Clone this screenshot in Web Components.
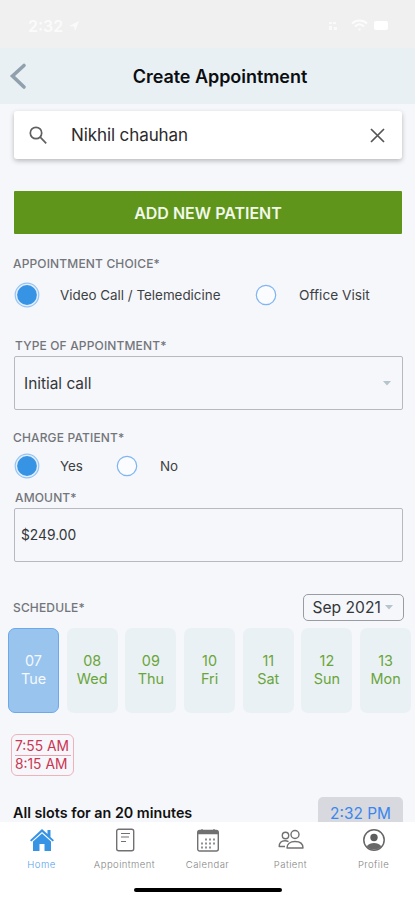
<!DOCTYPE html>
<html lang="en">
<head>
<meta charset="utf-8">
<title>Create Appointment</title>
<style>
html,body{margin:0;height:100%}
body{font-family:Inter,"Liberation Sans",sans-serif;color:#222;background:#f5f7fb;overflow:hidden}
</style>
</head>
<body>
<appointment-screen></appointment-screen>
<script>
function define(name, render) {
  customElements.define(name, class extends HTMLElement {
    connectedCallback() {
      if (this.shadowRoot) return;
      this.attachShadow({ mode: 'open' }).innerHTML = render(this);
    }
  });
}

define('status-bar', () => `
<style>
:host{display:flex;height:48px;box-sizing:border-box;padding:3px 25px 0 28px;background:#f0f0f0;color:#fbfbfb;align-items:center;gap:6px;font-size:16px;font-weight:600}
.gap{flex:1}
svg{display:block}
</style>
<span>2:32</span>
<svg width="10" height="10" viewBox="0 0 10 10"><path d="M0 5 10 0 6 10 5 5.500z" fill="#fafafa"/></svg>
<span class="gap"></span>
<svg width="62" height="14" viewBox="0 0 62 14"><g fill="none" stroke="#fcfcfc" stroke-width="2"><path d="M24 4.500c4-4 11-4 15 0M27 7.500c3-3 6-3 9 0M30.500 10.500h2"/></g><rect x="46" y="2" width="14" height="9" rx="2" fill="#fff"/><path d="M1 3h3v2H1zM1 7h3v4H1zM6 8h3v3H6zM5 3h3v2H5z" fill="#fafafa"/></svg>`);

define('app-header', () => `
<style>
:host{display:grid;grid-template-columns:40px 1fr 40px;align-items:center;height:56px;background:#e8f0f4;color:#0b0d10}
svg{margin-left:9px;display:block}
h1{margin:1px -20px 0;padding-left:25px;text-align:center;font-size:18px;font-weight:600;letter-spacing:-.05px;line-height:24px}
</style>
<svg width="18" height="28" viewBox="0 0 18 28"><path d="M15 3.500 3.500 14 15 25" fill="none" stroke="#91a0ad" stroke-width="3.600" stroke-linecap="round" stroke-linejoin="miter"/></svg>
<h1><slot></slot></h1>`);

define('search-box', () => `
<style>
:host{display:flex;align-items:center;height:48px;box-sizing:border-box;margin:7px 13px 0 14px;padding:0 17px 0 15px;background:#fff;border-radius:3px;box-shadow:0 2px 5px rgba(0,0,0,.25)}
span{flex:1;margin-left:23px;font-size:17px;color:#2b2b2b;letter-spacing:-.1px}
svg{display:block}
</style>
<svg width="19" height="19" viewBox="0 0 19 19" fill="none" stroke="#606060" stroke-width="1.700"><circle cx="7" cy="7" r="5.700"/><path d="m11.200 11.200 6 6.200"/></svg>
<span><slot></slot></span>
<svg width="15" height="15" viewBox="0 0 15 15" fill="none" stroke="#555" stroke-width="1.700"><path d="m1 1 13 13M14 1 1 14"/></svg>`);

define('primary-button', () => `
<style>
:host{display:flex;align-items:center;justify-content:center;height:43px;margin:32px 13px 0 14px;background:#5f951b;color:#f2f8ea;font-size:16px;font-weight:600;border-radius:1px}
</style><slot></slot>`);

define('field-label', () => `
<style>:host{display:block;padding-left:13px;font-size:12px;line-height:16px;font-weight:500;color:#73757a;letter-spacing:.15px}</style><slot></slot>`);

define('radio-choice', el => `
<style>
:host{display:flex;flex:none;align-items:center;height:26px;font-size:13.400px;color:#3d3f42;white-space:nowrap}
svg{display:block;margin-right:20px}
</style>
<svg width="26" height="26" viewBox="0 0 26 26">${el.hasAttribute('checked')
  ? '<circle cx="13" cy="13" r="11.800" fill="#e2effd" stroke="#97c4f1" stroke-width="1.200"/><circle cx="13" cy="13" r="9.900" fill="#3794e5"/>'
  : '<circle cx="13" cy="13" r="9.700" fill="#fafcff" stroke="#80b5f1" stroke-width="1.200"/>'}</svg>
<slot></slot>`);

define('radio-row', () => `
<style>:host{display:flex;padding-left:14px}</style><slot></slot>`);

define('form-box', el => `
<style>
:host{display:flex;align-items:center;justify-content:space-between;box-sizing:border-box;height:54px;margin:0 12px 0 14px;padding:0 11px 0 9px;border:1.500px solid #b7b9c0;border-radius:2px;font-size:15.400px;color:#34363a}
:host([amount]){padding-left:6px;font-size:13.800px}
svg{display:block}
</style>
<span><slot></slot></span>${el.hasAttribute('amount') ? '' : '<svg width="8" height="5" viewBox="0 0 8 5"><path d="M0 0h8L4 4.500z" fill="#b4c5ce"/></svg>'}`);

define('schedule-head', () => `
<style>
:host{display:flex;justify-content:space-between;align-items:center;height:27px;padding-right:11.500px}
.m{display:flex;align-items:center;gap:4px;box-sizing:border-box;width:101px;height:27px;padding:0 0 0 9px;border:1px solid #999ca1;border-radius:5px;font-size:15.600px;line-height:19px;color:#34363a;white-space:nowrap}
svg{display:block}
</style>
<slot></slot>
<div class="m"><slot name="month"></slot><svg width="8" height="5" viewBox="0 0 8 5"><path d="M0 0h8L4 4.500z" fill="#b4c5ce"/></svg></div>`);

define('day-strip', () => `
<style>:host{display:flex;gap:7.700px;padding-left:8px;overflow:hidden}</style><slot></slot>`);

define('day-card', () => `
<style>
:host{display:flex;flex-direction:column;align-items:center;justify-content:center;flex:none;box-sizing:border-box;width:51px;height:85px;border-radius:7px;background:#eaf1f4;color:#69a53a;font-size:14.400px;line-height:18px}
:host([selected]){background:#99c4ee;border:1.500px solid #6ca8ea;color:#f4f9ff}
</style>
<slot name="d"></slot><slot></slot>`);

define('slot-range', () => `
<style>
:host{display:flex;flex-direction:column;box-sizing:border-box;width:63px;height:42px;margin-left:11px;padding:2px 2px 0 3px;border:1px solid #f0b1bb;border-radius:6px;color:#cc3450;font-size:13.800px;line-height:18px;white-space:nowrap}
div{height:18px}
div+div{border-top:1px solid #eda0ae;line-height:17px;height:17px}
</style>
<div><slot name="from"></slot></div><div><slot name="to"></slot></div>`);

define('slots-row', () => `
<style>
:host{display:flex;justify-content:space-between;align-items:flex-start;height:26px;padding:0 12px 0 13px}
b{font-size:14.300px;font-weight:600;line-height:18px;margin-top:8px;color:#111}
span{display:block;box-sizing:border-box;width:85px;height:25px;margin-top:1px;border-radius:5px 5px 0 0;background:#d7d9de;color:#3a86ee;font-size:15.400px;line-height:17px;padding-top:8px;text-align:center}
</style>
<b><slot></slot></b><span><slot name="time"></slot></span>`);

const icons = {
  home: '<path d="M12 1 0 12.200l1.400 1.400L12 4l10.600 9.600 1.400-1.400-3.500-3.300V2h-3v4z" fill="#3794e5"/><path d="M12 5.500 3 13.500V23h6.500v-7h5v7H21v-9.500z" fill="#3794e5"/>',
  doc: '<g fill="none" stroke="#717171" stroke-width="1.400"><rect x="3.700" y="1.200" width="17" height="21.500" rx="2"/><path d="M8 5.500h9M8 9h8M8 13.500h5" stroke-width="1.200"/></g>',
  cal: '<g fill="none" stroke="#717171" stroke-width="1.400"><rect x="1.700" y="2.500" width="20.600" height="20.500" rx="2"/><path d="M2 4.500h20" stroke-width="3.500"/><path d="M6 1v3M18 1v3" stroke-width="1.200"/><path d="M9 11.500h10M5 15.500h14M5 19.500h10" stroke-width="1.800" stroke-dasharray="2 2" stroke="#909090"/></g>',
  people: '<g fill="none" stroke="#717171" stroke-width="1.400" stroke-linejoin="round"><circle cx="16" cy="6.500" r="4"/><path d="M8 20c0-4 3-6.500 8-6.500s8 2.500 8 6.500z"/><circle cx="6.500" cy="7.500" r="3.200"/><path d="M6 18.500H.2c0-3.800 2-5.700 5.800-5.700 1.400 0 2.500.3 3.500.9"/></g>',
  user: '<circle cx="12" cy="12" r="10.200" fill="none" stroke="#666" stroke-width="1.500"/><circle cx="12" cy="9.500" r="3.700" fill="#5d5d5d"/><path d="M4.700 18.200c2-2.500 4.300-3.200 7.300-3.200s5.300.7 7.300 3.200A9.500 9.500 0 0 1 4.700 18.200z" fill="#686868"/>'
};
define('nav-item', el => `
<style>
:host{display:flex;flex-direction:column;align-items:center;flex:1;color:#858585;font-size:9.500px;line-height:12px;letter-spacing:.45px;font-weight:300}
:host([active]){color:#50a3ec}
svg{display:block;margin-bottom:6.500px;overflow:visible}
</style>
<svg width="24" height="24" viewBox="0 0 24 24">${icons[el.getAttribute('icon')]}</svg><slot></slot>`);

define('bottom-nav', () => `
<style>
:host{display:flex;flex-direction:column;height:78px;box-sizing:border-box;padding-top:6px;background:#fff}
nav{display:flex}
i{display:block;width:148px;height:4.500px;border-radius:3px;background:#000;margin:17px auto 0}
</style>
<nav><slot></slot></nav><i></i>`);

define('appointment-screen', () => `
<style>
:host{display:flex;flex-direction:column;height:900px;width:415px;overflow:hidden;background:#f5f7fb}
:host>*{flex:none}
</style>
<status-bar></status-bar>
<app-header>Create Appointment</app-header>
<search-box>Nikhil chauhan</search-box>
<primary-button>ADD NEW PATIENT</primary-button>
<field-label style="margin-top:22px">APPOINTMENT CHOICE*</field-label>
<radio-row style="margin-top:10px"><radio-choice checked style="width:239px">Video Call / Telemedicine</radio-choice><radio-choice style="font-size:13.700px">Office Visit</radio-choice></radio-row>
<field-label style="margin-top:30px;margin-left:2px">TYPE OF APPOINTMENT*</field-label>
<form-box style="margin-top:2px">Initial call</form-box>
<field-label style="margin-top:20px">CHARGE PATIENT*</field-label>
<radio-row style="margin-top:7px"><radio-choice checked style="width:100px">Yes</radio-choice><radio-choice>No</radio-choice></radio-row>
<field-label style="margin-top:11px;margin-left:2px">AMOUNT*</field-label>
<form-box amount style="margin-top:1.500px">$249.00</form-box>
<schedule-head style="margin-top:32.500px"><field-label>SCHEDULE*</field-label><span slot="month">Sep 2021</span></schedule-head>
<day-strip style="margin-top:6.500px">
${[['07','Tue'],['08','Wed'],['09','Thu'],['10','Fri'],['11','Sat'],['12','Sun'],['13','Mon']].map(([n,d],i)=>`<day-card${i?'':' selected'}><span slot="d">${n}</span>${d}</day-card>`).join('')}
</day-strip>
<slot-range style="margin-top:21px"><span slot="from">7:55 AM</span><span slot="to">8:15 AM</span></slot-range>
<slots-row style="margin-top:auto">All slots for an 20 minutes<span slot="time">2:32 PM</span></slots-row>
<bottom-nav><nav-item icon="home" active>Home</nav-item><nav-item icon="doc">Appointment</nav-item><nav-item icon="cal">Calendar</nav-item><nav-item icon="people">Patient</nav-item><nav-item icon="user">Profile</nav-item></bottom-nav>`);
</script>
</body>
</html>
